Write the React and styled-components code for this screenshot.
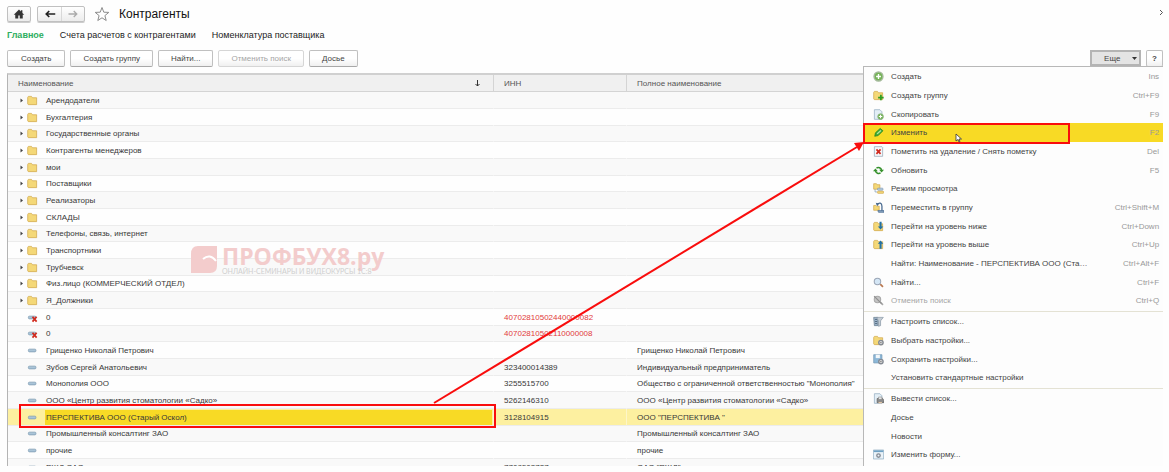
import styled, { createGlobalStyle } from "styled-components";

const GlobalStyle = createGlobalStyle`
  * {
    box-sizing: border-box;
  }

  body {
    margin: 0;
    background-color: #fefefe;
    color: #383838;
    font-family: "Liberation Sans", Arial, sans-serif;
    font-size: 8px;
  }

  button {
    font-family: inherit;
    font-size: 8px;
    color: #444;
  }
`;

const Page = styled.div`
  height: 100vh;
  padding: 0 6px 6px 7px;
  overflow: hidden;
`;

const Window = styled.main`
  position: relative;
  display: flex;
  flex-direction: column;
  height: 100%;
  overflow: hidden;
`;

const TitleBar = styled.header`
  display: flex;
  align-items: center;
  gap: 6px;
  flex: none;
  height: 28px;

  h1 {
    flex: 1;
    margin: 0 0 0 3px;
    font-size: 12px;
    font-weight: normal;
    color: #111;
  }
`;

const NavGroup = styled.div`
  display: flex;
  height: 16px;
  border: 1px solid #c0c0c0;
  border-radius: 2px;
  background: linear-gradient(#fff, #ececec);
  box-shadow: 0 1px 0 #ccc;
`;

const NavButton = styled.button`
  display: flex;
  align-items: center;
  justify-content: center;
  width: ${(props) => props.$width || 22}px;
  padding: 0;
  border: none;
  background: none;

  & + & {
    border-left: 1px solid #d8d8d8;
  }
`;

const StarButton = styled.button`
  display: flex;
  margin-left: 3px;
  padding: 0;
  border: none;
  background: none;
`;

const CloseButton = styled.button`
  display: flex;
  align-self: flex-start;
  padding: 10px 0 0;
  border: none;
  background: none;
`;

const Sections = styled.nav`
  display: flex;
  align-items: center;
  gap: 16px;
  flex: none;
  height: 14px;
  font-size: 9px;

  a {
    color: #222;
    text-decoration: none;
  }

  a[aria-current] {
    color: #2fae60;
    font-weight: bold;
  }
`;

const Toolbar = styled.div`
  display: flex;
  align-items: flex-start;
  gap: 5px;
  flex: none;
  height: 31px;
  padding-top: 8px;
`;

const ToolButton = styled.button`
  height: 17px;
  padding: 0 ${(props) => props.$pad || 12}px;
  border: 1px solid #c0c0c0;
  border-bottom-color: #a8a8a8;
  border-radius: 2px;
  background: linear-gradient(#fff 50%, #f0f0f0);

  &:disabled {
    color: #a6a6a6;
    border-color: #d6d6d6;
  }
`;

const MoreBox = styled.div`
  position: relative;
  margin-left: auto;
`;

const MoreButton = styled.button`
  display: flex;
  align-items: center;
  justify-content: space-between;
  width: 51px;
  height: 16px;
  padding: 0 2px 0 12px;
  border: 2px solid #b4b4b4;
  background-color: #e4e4e4;
`;

const Menu = styled.ul`
  position: absolute;
  z-index: 2;
  top: 16px;
  right: -22px;
  width: 300px;
  margin: 0;
  padding: 0 0 6px;
  border: solid #b8b8b8;
  border-width: 1px 0 0 1px;
  background-color: #fdfdfd;
  list-style: none;
`;

const MenuGroup = styled.li`
  & + & {
    margin-top: 1px;
    border-top: 1px solid #e4e2d4;
  }

  ul {
    margin: 0;
    padding: 0;
    list-style: none;
  }

  ul li {
    position: relative;
    height: 19px;
  }

  ul li:nth-child(3n) {
    height: 18px;
  }
`;

const MenuItem = styled.button`
  display: flex;
  align-items: center;
  width: 100%;
  height: 100%;
  padding: 0 4px 0 9px;
  border: none;
  background-color: ${(props) => (props.$active ? "#f8da25" : "transparent")};
  text-align: left;

  &:disabled {
    color: #a6a6a6;
  }

  kbd {
    margin-left: auto;
    color: #999;
    font-family: inherit;
  }
`;

const IconSlot = styled.span`
  display: flex;
  width: 18px;
`;

const MenuMark = styled.div`
  position: absolute;
  inset: 0 auto -2px -1px;
  width: 207px;
  border: 2px solid #f90d0d;
  pointer-events: none;
`;

const Pointer = styled.svg`
  position: absolute;
  top: 10px;
  left: 91px;
`;

const Grid = styled.table`
  flex: none;
  width: 100%;
  border-left: 1px solid #b4b4b4;
  border-top: 2px solid #d0d0d0;
  border-spacing: 0;
  table-layout: fixed;

  col:nth-child(1) {
    width: 42%;
  }

  col:nth-child(2) {
    width: 133px;
  }

  th {
    height: 17px;
    padding: 0 10px;
    border-bottom: 1px solid #d4d4d4;
    background-color: #f0f0f0;
    color: #555;
    font-weight: normal;
    text-align: left;
  }

  th + th {
    border-left: 1px solid #d4d4d4;
  }

  th > div {
    display: flex;
    align-items: center;
    justify-content: space-between;
  }
`;

const SortMark = styled.svg`
  margin-right: 3px;
`;

const Row = styled.tr`
  height: 17px;
  background-color: #fefefe;

  &:nth-child(3n) {
    height: 16px;
  }

  &:nth-child(odd) {
    background-color: #f9f9f9;
  }

  td {
    position: relative;
    padding: 0 10px;
    border-bottom: 1px solid #ececec;
    white-space: nowrap;
  }

  &[aria-selected="true"] td {
    background-color: #fdf0a0;
  }

  td + td {
    border-left: 1px solid ${(props) => (props["aria-selected"] ? "#fdf6c8" : "transparent")};
    color: ${(props) => (props.$deleted ? "#e23b3b" : "inherit")};
  }
`;

const NameCell = styled.div`
  display: flex;
  align-items: center;
  height: 15px;
`;

const Expander = styled.span`
  width: 7px;
  height: 5px;
  margin-left: 2px;

  svg {
    display: block;
  }
`;

const RowIcon = styled.span`
  display: flex;
  align-items: center;
  width: 18px;
`;

const NameText = styled.span`
  flex: 1;
  margin-right: -9px;
  padding-left: 1px;
  line-height: 15px;
  background-color: ${(props) => (props.$current ? "#f8da25" : "transparent")};
`;

const RowMark = styled.div`
  position: absolute;
  z-index: 1;
  inset: -5px -3px -3px 11px;
  border: 2px solid #f90d0d;
  pointer-events: none;
`;

const ArrowLayer = styled.svg`
  position: absolute;
  z-index: 3;
  top: 0;
  left: 0;
  pointer-events: none;
`;

const Watermark = styled.div`
  position: absolute;
  z-index: 1;
  top: 246px;
  left: 184px;
  display: flex;
  gap: 5px;
  color: #f3cccc;
  font-family: "Open Sans", sans-serif;
  pointer-events: none;

  strong {
    display: block;
    font-size: 23px;
    font-weight: 700;
    line-height: 20px;
  }

  small {
    display: block;
    margin-top: 1px;
    color: #cfcfcf;
    font-family: Lato, sans-serif;
    font-size: 7px;
    line-height: 9px;
    white-space: nowrap;
  }
`;

const Svg = ({ size = 11, children }) => (
  <svg width={size} height={size} viewBox="0 0 16 16" fill="none" aria-hidden="true">
    {children}
  </svg>
);

const Folder = () => (
  <path d="M1 3.500 2 2h4.500l1.500 2H14v10H2L1 13z" fill="#f4d878" stroke="#cfa545" />
);

const Gear = () => (
  <>
    <circle cx="11.500" cy="11" r="3.200" fill="#ddd" stroke="#858b94" strokeWidth="2" />
    <circle cx="11.500" cy="11" r="1" fill="#666" />
  </>
);

const Lens = ({ muted }) => (
  <>
    <path d="m10.500 10.500 4 4" stroke={muted ? "#a8a8a8" : "#b97850"} strokeWidth="2.500" />
    <circle cx="6.500" cy="6.500" r="4.700" fill={muted ? "#c4c4c4" : "#d4e6f5"} stroke={muted ? "#a8a8a8" : "#9aa5b5"} strokeWidth="1.500" />
  </>
);

const Sheet = () => <path d="M2 1h8l3 3v11H2z" fill="#e3eef6" stroke="#8fa9bd" />;

const icons = {
  add: (
    <>
      <circle cx="8" cy="8" r="6.500" fill="#74b356" stroke="#a3b99a" strokeWidth="2" />
      <path d="M8 4.500v7M4.500 8h7" stroke="#fff" strokeWidth="2" />
    </>
  ),
  addFolder: (
    <>
      <Folder />
      <path d="M11.500 7v8M7.500 11h8" stroke="#2e9d22" strokeWidth="2.500" />
    </>
  ),
  copy: (
    <>
      <Sheet />
      <circle cx="11" cy="11" r="4.200" fill="#74b356" stroke="#8fb482" />
      <path d="M11 8.500v5M8.500 11h5" stroke="#fff" strokeWidth="1.500" />
    </>
  ),
  edit: (
    <>
      <path d="m2.500 13.500 1-5L10.500 2 14.500 5.500l-7 7z" fill="#3fae35" stroke="#1e7d20" />
      <path d="m6 10 5.500-5" stroke="#b9e6a5" strokeWidth="1.800" />
    </>
  ),
  remove: (
    <>
      <path d="M2 1h11l1 1v13H2z" fill="#f5f8fb" stroke="#8fa0b0" />
      <path d="m5 5 6 6.500M11 5l-6 6.500" stroke="#d12a1e" strokeWidth="2.500" />
    </>
  ),
  refresh: (
    <>
      <path d="M5 4.500a5 5 0 0 1 7.500 3M11 11.500a5 5 0 0 1-7.500-3" stroke="#36912c" strokeWidth="2.200" />
      <path d="M9 7h7l-3.500 4zM0 9h7L3.500 5z" fill="#36912c" />
    </>
  ),
  view: (
    <>
      <path d="M1 1h4l1 1.500h4V9H1z" fill="#f4d878" stroke="#cfa545" />
      <path d="M3 9v4h3" stroke="#7c98b5" />
      <rect x="6.500" y="7.500" width="8" height="3" rx="1" fill="#b7cde0" stroke="#7c98b5" />
      <rect x="6.500" y="12" width="9" height="3" rx="1" fill="#f4d878" stroke="#cfa545" />
    </>
  ),
  move: (
    <>
      <path d="M1 5h3l1 1h4v6H1z" fill="#f4d878" stroke="#cfa545" />
      <path d="M6 4c3-4 7-3 7 2v7" stroke="#44668c" strokeWidth="1.800" />
      <path d="M7 12.500h9V15H8z" fill="#8ba7c2" stroke="#44668c" />
      <path d="m4 1 5 1-3 4z" fill="#44668c" />
    </>
  ),
  down: (
    <>
      <Folder />
      <path d="M9.500 1h3v7H15l-4 4.500L7 8h2.500z" fill="#2471a3" />
    </>
  ),
  up: (
    <>
      <Folder />
      <path d="M9.500 14h3V7H15l-4-5-4 5h2.500z" fill="#2471a3" />
    </>
  ),
  find: <Lens />,
  findOff: (
    <>
      <Lens muted />
      <path d="m1.500 1.500 11 11" stroke="#8d8d8d" strokeWidth="1.500" />
    </>
  ),
  filter: (
    <>
      <path d="M1 2h6v12H2z" fill="#9fb6cb" stroke="#5e7488" />
      <path d="M3 5h3M3 8h3M3 11h3" stroke="#34495e" />
      <path d="M5 2h10l-4 5v7l-3 1V7z" fill="#c5cdd4" stroke="#8595a3" />
    </>
  ),
  pick: (
    <>
      <Folder />
      <Gear />
    </>
  ),
  save: (
    <>
      <path d="M1 1h12v12H1z" fill="#8db8d8" stroke="#7298b5" />
      <path d="M4 1h6v5H4z" fill="#f2f7fa" />
      <Gear />
    </>
  ),
  print: (
    <>
      <Sheet />
      <path d="M6 8h8l2 3v3H6z" fill="#8b8b8b" stroke="#5e5e5e" />
      <path d="M8 6h5v3H8z" fill="#fff" stroke="#888" />
      <path d="M8 13h5v2H8z" fill="#e4c8a8" />
    </>
  ),
  form: (
    <>
      <path d="M.5 1.500h15v13H.5z" fill="#eaf2f8" stroke="#86a6bd" />
      <path d="M1 2h14v2.500H1z" fill="#6fa1c4" />
      <circle cx="8" cy="9.500" r="2.500" stroke="#858b94" strokeWidth="2" />
    </>
  ),
};

const menuGroups = [
  [
    { icon: "add", label: "Создать", keys: "Ins" },
    { icon: "addFolder", label: "Создать группу", keys: "Ctrl+F9" },
    { icon: "copy", label: "Скопировать", keys: "F9" },
    { icon: "edit", label: "Изменить", keys: "F2", active: true },
    { icon: "remove", label: "Пометить на удаление / Снять пометку", keys: "Del" },
    { icon: "refresh", label: "Обновить", keys: "F5" },
    { icon: "view", label: "Режим просмотра" },
    { icon: "move", label: "Переместить в группу", keys: "Ctrl+Shift+M" },
    { icon: "down", label: "Перейти на уровень ниже", keys: "Ctrl+Down" },
    { icon: "up", label: "Перейти на уровень выше", keys: "Ctrl+Up" },
    { label: "Найти: Наименование - ПЕРСПЕКТИВА ООО (Ста…", keys: "Ctrl+Alt+F" },
    { icon: "find", label: "Найти...", keys: "Ctrl+F" },
    { icon: "findOff", label: "Отменить поиск", keys: "Ctrl+Q", disabled: true },
  ],
  [
    { icon: "filter", label: "Настроить список..." },
    { icon: "pick", label: "Выбрать настройки..." },
    { icon: "save", label: "Сохранить настройки..." },
    { label: "Установить стандартные настройки" },
  ],
  [
    { icon: "print", label: "Вывести список..." },
    { label: "Досье" },
    { label: "Новости" },
    { icon: "form", label: "Изменить форму..." },
  ],
];

const folders = [
  "Арендодатели",
  "Бухгалтерия",
  "Государственные органы",
  "Контрагенты менеджеров",
  "мои",
  "Поставщики",
  "Реализаторы",
  "СКЛАДЫ",
  "Телефоны, связь, интернет",
  "Транспортники",
  "Трубчевск",
  "Физ.лицо (КОММЕРЧЕСКИЙ ОТДЕЛ)",
  "Я_Должники",
];

const rows = [
  ...folders.map((name) => ({ name, folder: true })),
  { name: "0", inn: "40702810502440000082", deleted: true },
  { name: "0", inn: "40702810502110000008", deleted: true },
  { name: "Грищенко Николай Петрович", full: "Грищенко Николай Петрович" },
  { name: "Зубов Сергей Анатольевич", inn: "323400014389", full: "Индивидуальный предприниматель" },
  { name: "Монополия ООО", inn: "3255515700", full: 'Общество с ограниченной ответственностью "Монополия"' },
  { name: "ООО «Центр развития стоматологии «Садко»", inn: "5262146310", full: "ООО «Центр развития стоматологии «Садко»" },
  { name: "ПЕРСПЕКТИВА ООО (Старый Оскол)", inn: "3128104915", full: 'ООО "ПЕРСПЕКТИВА "', current: true },
  { name: "Промышленный консалтинг ЗАО", full: "Промышленный консалтинг ЗАО" },
  { name: "прочие", full: "прочие" },
  { name: "РЖД ОАО", inn: "7708503727", full: 'ОАО "РЖД"' },
];

const ItemIcon = ({ row }) => {
  if (row.folder) {
    return (
      <Svg>
        <Folder />
      </Svg>
    );
  }
  return (
    <Svg>
      <rect x="2" y="6" width="11" height="4" rx="1.500" fill="#a9c4d8" stroke="#7896ae" />
      {row.deleted && <path d="m8 7 6 7M14 7l-6 7" stroke="#d12a1e" strokeWidth="2.500" />}
    </Svg>
  );
};

const MoreMenu = () => (
  <Menu>
    {menuGroups.map((group, index) => (
      <MenuGroup key={index}>
        <ul>
          {group.map((item) => (
            <li key={item.label}>
              <MenuItem type="button" $active={item.active} disabled={item.disabled}>
                <IconSlot>{item.icon && <Svg>{icons[item.icon]}</Svg>}</IconSlot>
                {item.label}
                {item.keys && <kbd>{item.keys}</kbd>}
              </MenuItem>
              {item.active && (
                <>
                  <MenuMark />
                  <Pointer width="7" height="10" viewBox="0 0 7 10">
                    <path d="M1 1v7l2-1.500L4 9l1-.5-1-2.500h2.500z" fill="#fff" stroke="#333" strokeWidth=".8" />
                  </Pointer>
                </>
              )}
            </li>
          ))}
        </ul>
      </MenuGroup>
    ))}
  </Menu>
);

const App = () => {
  return (
    <>
      <GlobalStyle />
      <Page>
        <Window>
          <TitleBar>
            <NavGroup>
              <NavButton type="button" aria-label="Домой">
                <Svg size={12}>
                  <path d="M8 2 1 9h2v5h4v-4h2v4h4V9h2l-2.500-2.500V3h-2v1.500z" fill="#333" />
                </Svg>
              </NavButton>
            </NavGroup>
            <NavGroup>
              <NavButton type="button" aria-label="Назад" $width={23}>
                <Svg size={12}>
                  <path d="M15 8H3m4-4L3 8l4 4" stroke="#222" strokeWidth="2.200" />
                </Svg>
              </NavButton>
              <NavButton type="button" aria-label="Вперед" $width={23}>
                <Svg size={12}>
                  <path d="M2 8h11M9 4l4 4-4 4" stroke="#aaa" strokeWidth="1.800" />
                </Svg>
              </NavButton>
            </NavGroup>
            <StarButton type="button" aria-label="В избранное">
              <Svg size={16}>
                <path d="m8 1.500 1.800 4.700 5 .2-3.900 3.200 1.300 4.900L8 11.800l-4.200 2.700 1.300-4.900L1.200 6.400l5-.2z" stroke="#8c8c8c" />
              </Svg>
            </StarButton>
            <h1>Контрагенты</h1>
            <CloseButton type="button" aria-label="Закрыть">
              <svg width="3" height="5" viewBox="0 0 3 5">
                <path d="m0 0 2.500 2.500L0 5" fill="none" stroke="#555" />
              </svg>
            </CloseButton>
          </TitleBar>
          <Sections>
            <a href="#main" aria-current="page">Главное</a>
            <a href="#accounts">Счета расчетов с контрагентами</a>
            <a href="#nomenclature">Номенклатура поставщика</a>
          </Sections>
          <Toolbar>
            <ToolButton type="button" $pad={13}>Создать</ToolButton>
            <ToolButton type="button">Создать группу</ToolButton>
            <ToolButton type="button">Найти...</ToolButton>
            <ToolButton type="button" disabled>Отменить поиск</ToolButton>
            <ToolButton type="button">Досье</ToolButton>
            <MoreBox>
              <MoreButton type="button" aria-expanded="true">
                Еще
                <svg width="5" height="3" viewBox="0 0 5 3">
                  <path d="M0 0h5L2.500 3z" fill="#333" />
                </svg>
              </MoreButton>
              <MoreMenu />
            </MoreBox>
            <ToolButton type="button" $pad={5}><b>?</b></ToolButton>
          </Toolbar>
          <Grid>
            <colgroup>
              <col />
              <col />
              <col />
            </colgroup>
            <thead>
              <tr>
                <th>
                  <div>
                    Наименование
                    <SortMark width="5" height="7" viewBox="0 0 5 7">
                      <path d="M2.500 0v6M.5 4l2 2 2-2" fill="none" stroke="#333" />
                    </SortMark>
                  </div>
                </th>
                <th>ИНН</th>
                <th>Полное наименование</th>
              </tr>
            </thead>
            <tbody>
              {rows.map((row, index) => (
                <Row key={index} $deleted={row.deleted} aria-selected={row.current}>
                  <td>
                    <NameCell>
                      <Expander>
                        {row.folder && (
                          <svg width="3" height="5" viewBox="0 0 3 5">
                            <path d="M.5.5v4L3 2.500z" fill="#444" />
                          </svg>
                        )}
                      </Expander>
                      <RowIcon>
                        <ItemIcon row={row} />
                      </RowIcon>
                      <NameText $current={row.current}>{row.name}</NameText>
                    </NameCell>
                    {row.current && <RowMark />}
                  </td>
                  <td>{row.inn}</td>
                  <td>{row.full}</td>
                </Row>
              ))}
            </tbody>
          </Grid>
          <Watermark>
            <svg width="26" height="28" viewBox="0 0 26 28">
              <path d="M7 0h19v20q0 7-7 7H0V8q0-8 7-8z" fill="#f3cccc" />
              <path d="M12 13q7-6 13 2" fill="none" stroke="#fff" strokeWidth="2" />
            </svg>
            <div>
              <strong>ПРОФБУХ8.ру</strong>
              <small>ОНЛАЙН-СЕМИНАРЫ И ВИДЕОКУРСЫ 1С:8</small>
            </div>
          </Watermark>
          <ArrowLayer width="870" height="420" viewBox="0 0 870 420">
            <path d="M427 403 850 147" stroke="#f90d0d" strokeWidth="2" />
            <path d="m857 142-5 9-5-8z" fill="#f90d0d" />
          </ArrowLayer>
        </Window>
      </Page>
    </>
  );
};

export default App;
